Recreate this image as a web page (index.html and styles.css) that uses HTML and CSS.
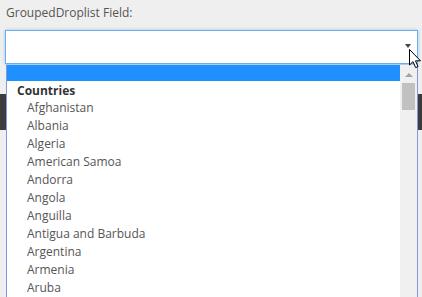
FILE: index.html
```html
<!DOCTYPE html>
<html lang="en">
<head>
    <meta charset="UTF-8">
    <meta name="viewport" content="width=device-width, initial-scale=1.0">
    <title>GroupedDroplist</title>
    <link rel="stylesheet" href="styles.css">
</head>
<body>

<div class="field">
    <label class="field-label">GroupedDroplist Field:</label>
    <div class="select">
        <span class="arrow"></span>
    </div>
    <div class="toolbar"></div>

    <div class="dropdown">
        <div class="options">
            <div class="option selected">&nbsp;</div>
            <div class="group">Countries</div>
            <div class="option">Afghanistan</div>
            <div class="option">Albania</div>
            <div class="option">Algeria</div>
            <div class="option">American Samoa</div>
            <div class="option">Andorra</div>
            <div class="option">Angola</div>
            <div class="option">Anguilla</div>
            <div class="option">Antigua and Barbuda</div>
            <div class="option">Argentina</div>
            <div class="option">Armenia</div>
            <div class="option">Aruba</div>
        </div>
        <div class="scrollbar">
            <div class="scroll-up"></div>
            <div class="scroll-thumb"></div>
        </div>
    </div>

    <!-- mouse pointer over the arrow -->
    <svg class="cursor" width="13" height="20" viewBox="0 0 13 20">
        <path d="M0.5 0.5 L0.5 16 L4 12.6 L6.6 18.6 L9 17.6 L6.5 11.8 L11.5 11.8 Z" fill="#fff" stroke="#000" stroke-width="1"/>
    </svg>
</div>

</body>
</html>
```

FILE: styles.css
```css
body {
    margin: 0;
    background: #efefef;
    font-family: "Open Sans", sans-serif;
    font-size: 12px;
    overflow: hidden;
}

.field {
    position: relative;
    padding-top: 6px;
    height: 297px;
}

.field-label {
    display: block;
    padding-left: 6px;
    height: 24px;
    line-height: 14px;
    color: #555;
}

.select {
    position: relative;
    margin-left: 5px;
    width: 411px;
    height: 32px;
    background: #fff;
    border: 1px solid #6aaef0;
    box-shadow: 0 0 3px rgba(102, 170, 235, 0.6);
}

.arrow {
    position: absolute;
    right: 6px;
    top: 13px;
    width: 0;
    height: 0;
    border-left: 3.5px solid transparent;
    border-right: 3.5px solid transparent;
    border-top: 4px solid #444;
}

.toolbar {
    margin-top: 30px;
    height: 36px;
    background: #3c3c3c;
}

.dropdown {
    position: absolute;
    left: 6px;
    top: 64px;
    width: 410px;
    height: 240px;
    display: flex;
    background: #fff;
    border-left: 1px solid #7f9ad6;
    border-right: 1px solid #7f9ad6;
    border-top: 1px solid #a9cdf3;
}

.options {
    flex: 1;
    overflow: hidden;
}

.option {
    height: 18px;
    line-height: 18px;
    padding-left: 20px;
    color: #555;
    white-space: nowrap;
}

.option.selected {
    height: 16px;
    line-height: 16px;
    background: #1e90ff;
}

.group {
    height: 17px;
    line-height: 17px;
    padding-left: 10px;
    padding-top: 1px;
    font-weight: 700;
    color: #333;
}

.scrollbar {
    width: 17px;
    background: #f0f0f0;
    display: flex;
    flex-direction: column;
    align-items: center;
}

.scroll-up {
    margin-top: 8px;
    width: 0;
    height: 0;
    border-left: 4px solid transparent;
    border-right: 4px solid transparent;
    border-bottom: 4px solid #a3a3a3;
}

.scroll-thumb {
    margin-top: 6px;
    width: 13px;
    height: 27px;
    background: #c1c1c1;
}

.cursor {
    position: absolute;
    left: 409px;
    top: 49px;
}
```
